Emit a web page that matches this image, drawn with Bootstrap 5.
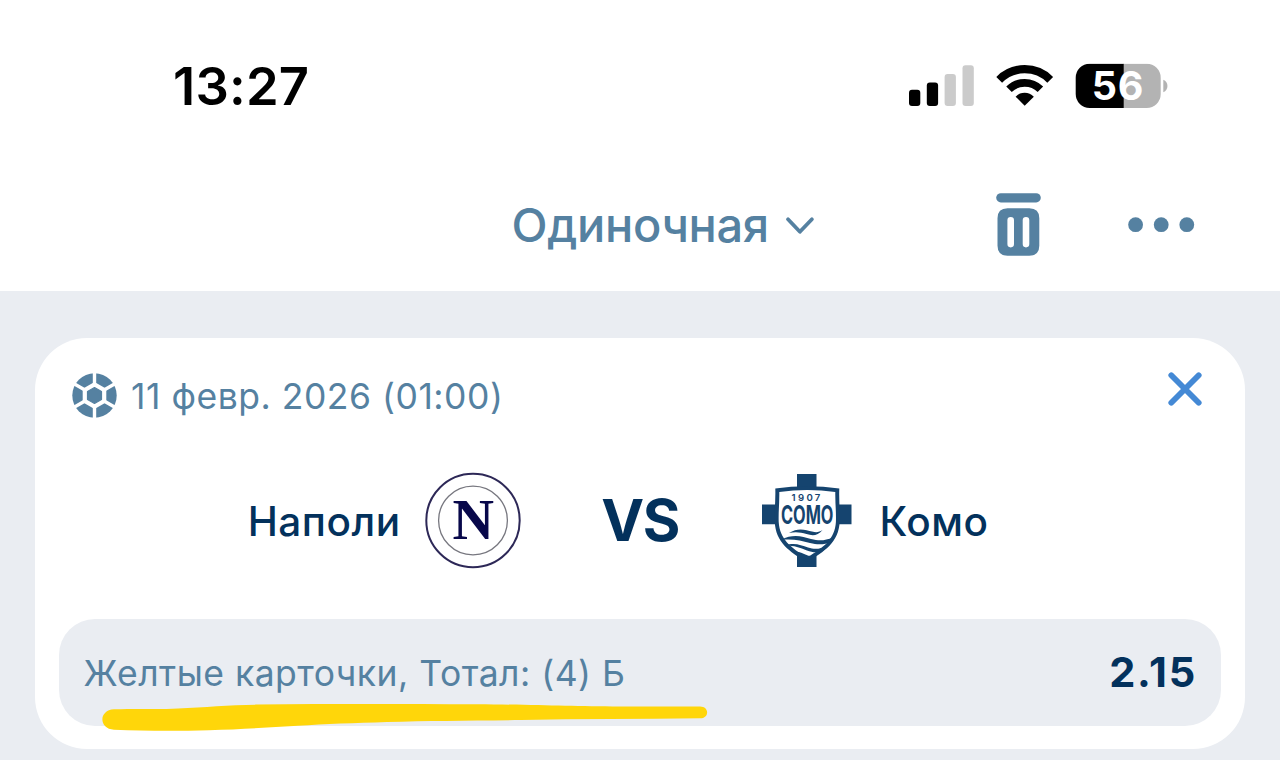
<!DOCTYPE html>
<html lang="ru">
<head>
  <meta charset="UTF-8">
  <meta name="viewport" content="width=device-width, initial-scale=1">
  <title>Купон</title>
  <link href="https://cdn.jsdelivr.net/npm/bootstrap@5.3.0/dist/css/bootstrap.min.css" rel="stylesheet">
  <style>
    :root {
      --slate: #5581a1;
      --navy: #03315c;
      --page: #eaedf2;
    }
    body {
      font-family: Inter, "Liberation Sans", sans-serif;
      background: var(--page);
      height: 760px;
      overflow: hidden;
      line-height: 1;
    }
    svg { display: block; flex: none; overflow: visible; }
    .status-bar { height: 173px; padding: 0 112px 0 173px; }
    .clock { font-size: 52.5px; font-weight: 600; letter-spacing: .2px; color: #000; }
    .toolbar { height: 118px; padding: 0 84px 14px 511.6px; color: var(--slate); }
    .bet-type { font-size: 47px; font-weight: 500; letter-spacing: -.35px; margin-bottom: 2px; }
    .slip { margin: 47px 35px 0; height: 411px; border-radius: 52px; padding: 0 24px; }
    .slip-head { height: 116px; padding: 0 19px 0 13px; color: var(--slate); }
    .event-date { font-size: 35.5px; letter-spacing: .52px; margin: 1px 0 0 14px; }
    .close-x { margin-bottom: 14px; }
    .ball { margin-bottom: 2px; }
    .teams { height: 133px; display: grid; grid-template-columns: 1fr auto 1fr; padding-left: 2px; color: var(--navy); }
    .team-name { font-size: 40.5px; font-weight: 500; letter-spacing: .5px; margin-top: 3px; }
    .versus { font-size: 57.5px; font-weight: 700; width: 241px; letter-spacing: -1.5px; padding-right: 2px; }
    .market { height: 107px; margin-top: 32px; border-radius: 36px; padding: 0 24px 0 24.4px; background: var(--page); }
    .market-name { font-size: 35.5px; letter-spacing: .49px; margin-top: 2px; color: var(--slate); }
    .odds { font-size: 41.5px; font-weight: 700; letter-spacing: 1.8px; margin-top: 1px; color: var(--navy); }
    .marker-line { left: 40px; top: 80px; }
  </style>
</head>
<body>
  <header class="bg-white">
    <div class="status-bar d-flex align-items-center justify-content-between">
      <span class="clock">13:27</span>
      <div class="d-flex align-items-center">
        <svg width="260" height="56" viewBox="908 58.500 260 56">
          <!-- signal -->
          <g fill="#000">
            <rect x="909" y="89.3" width="11.3" height="16.2" rx="3"/>
            <rect x="926.8" y="82" width="11.3" height="23.5" rx="3"/>
          </g>
          <g fill="#cbcbcb">
            <rect x="944.6" y="73.5" width="11.3" height="32" rx="3"/>
            <rect x="962.5" y="64.7" width="11.3" height="40.8" rx="3"/>
          </g>
          <!-- wifi -->
          <g fill="none" stroke="#000">
            <path d="M999.2 79.3a36 36 0 0 1 51 0" stroke-width="8.2"/>
            <path d="M1009 88.8a22.3 22.3 0 0 1 31.4 0" stroke-width="7.8"/>
          </g>
          <path d="M1015.6 96.2a12.7 12.7 0 0 1 18.2 0L1024.7 105.3z"/>
          <!-- battery -->
          <clipPath id="cell"><rect x="1075.7" y="63.2" width="85" height="44.4" rx="14"/></clipPath>
          <g clip-path="url(#cell)">
            <rect x="1075" y="63" width="49" height="45"/>
            <rect x="1123.7" y="63" width="38" height="45" fill="#b3b3b3"/>
          </g>
          <path d="M1163.3 79.300c5.500 2 5.500 10.500 0 12.500z" fill="#b3b3b3"/>
          <text x="1091.800" y="99.600" font-size="39.500" font-weight="700" fill="#fff" letter-spacing=".8">56</text>
        </svg>
      </div>
    </div>
    <div class="toolbar d-flex align-items-center">
      <div class="d-flex align-items-center">
        <span class="bet-type">Одиночная</span>
        <svg class="ms-3" width="30" height="20" viewBox="785 215.500 30 20" fill="none" stroke="currentColor" stroke-width="3.8" stroke-linecap="round" stroke-linejoin="round">
          <path d="M788 219.800l11.900 12.500 12-12.500"/>
        </svg>
      </div>
      <div class="d-flex align-items-center ms-auto">
        <svg width="200" height="64" viewBox="996 193 200 64" fill="currentColor">
          <rect x="996.200" y="193.200" width="44.600" height="9.200" rx="4.600"/>
          <path fill-rule="evenodd" d="M1007.500 208.300h21.800q10 0 10 10v27.500q0 10-10 10h-21.800q-10 0-10-10v-27.500q0-10 10-10zM1010.700 217a3.300 3.300 0 0 0-3.300 3.300v23.800a3.300 3.300 0 0 0 6.600 0v-23.800a3.300 3.300 0 0 0-3.300-3.300zM1026 217a3.300 3.300 0 0 0-3.300 3.300v23.800a3.300 3.300 0 0 0 6.600 0v-23.800a3.300 3.300 0 0 0-3.300-3.300z"/>
          <circle cx="1135.600" cy="224.700" r="7.400"/>
          <circle cx="1161.200" cy="224.700" r="7.400"/>
          <circle cx="1186.800" cy="224.700" r="7.400"/>
        </svg>
      </div>
    </div>
  </header>

  <main class="slip bg-white">
    <div class="slip-head d-flex align-items-center">
      <svg class="ball" width="45" height="45" viewBox="-22.500 -22.500 45 45">
        <circle r="22.200" fill="currentColor"/>
        <path d="M0-23V23M-20-11.500L20 11.500M-20 11.500L20-11.500" stroke="#fff" stroke-width="3.400"/>
        <path d="M0-13.600L11.800-6.800V6.800L0 13.600-11.800 6.800V-6.800z" fill="#fff"/>
        <path d="M0-8L7-4V4L0 8-7 4V-4z" fill="currentColor" stroke="currentColor" stroke-width="1.200" stroke-linejoin="round"/>
      </svg>
      <span class="event-date">11 февр. 2026 (01:00)</span>
      <svg class="close-x ms-auto" width="34" height="34" viewBox="0 0 34 34" stroke="#4489d5" stroke-width="5.800" stroke-linecap="round">
        <path d="M3.300 3.300l27.400 27.400M30.700 3.300L3.300 30.700"/>
      </svg>
    </div>

    <div class="teams align-items-center">
      <div class="d-flex align-items-center justify-content-end">
        <span class="team-name">Наполи</span>
        <svg class="ms-4" width="96" height="96" viewBox="-48 -47.500 96 96">
          <circle r="46.700" fill="#fff" stroke="#2d2857" stroke-width="2"/>
          <circle r="34.400" fill="none" stroke="#77777f" stroke-width="1.300"/>
          <text x=".3" y="18.500" text-anchor="middle" font-family="Liberation Serif" font-weight="700" font-size="57.500" fill="#08084a">N</text>
        </svg>
      </div>
      <span class="versus text-center">VS</span>
      <div class="d-flex align-items-center">
        <svg width="90" height="94" viewBox="762 474 90 94">
          <path d="M797 474h19.500v30.500H851.500v19.800H816.500V567H797V524.300H762V504.500h35z" fill="#15446f"/>
          <path d="M775.300 488.500q31.700-4.500 64 0c-.5 12 .8 22 .4 33-1 21-15 30-33 40.500-17.500-10.500-31-19.500-32-40.500-.4-11 1-21 .6-33z" fill="#15446f"/>
          <path d="M779.300 492q28-4 56 0c-.2 11 1 20 .6 30-1 17-12 25.500-28.900 35.500-16.500-10-27.300-18.500-28.300-35.500-.4-10 .8-19 .6-30z" fill="#fff"/>
          <text x="791.600" y="501.300" font-size="9.600" font-weight="600" fill="#15446f" letter-spacing="2.300">1907</text>
          <text transform="translate(781 523.800) scale(.64 1)" font-size="25.500" font-weight="700" fill="#15446f">COMO</text>
          <g fill="#15446f">
            <path d="M789 533c9-6 17-3 23-1.500 5 1.300 7 .5 10.500-1.500-5 6-10 6-16 4-6-1.800-11-2.500-17.500-1z"/>
            <path d="M781 540c12-6.500 21-3.500 30-1 9 2.300 14 1.500 22-1.500l-1 4c-8 3.500-14 3.500-22 1.500-9-2.300-17.500-4.500-29-3z"/>
            <path d="M785 545.500c9-3.500 16-.5 23 2 7 2.300 12 1.500 19-1.500l-4 5c-6 2-10.500 1.500-16-.5-7-2.700-12.500-5-22-5z"/>
            <path d="M793 552c6-.8 9 1 13 2.800 3 1.500 5 1.300 8 .7l-4 2.500-4 1.500z"/>
          </g>
        </svg>
        <span class="team-name ms-4 ps-1">Комо</span>
      </div>
    </div>

    <div class="market position-relative d-flex align-items-center justify-content-between">
      <span class="market-name">Желтые карточки, Тотал: (4) Б</span>
      <span class="odds">2.15</span>
      <!-- hand-drawn highlight under the market name -->
      <svg class="marker-line position-absolute" width="612" height="34" viewBox="99 699 612 34">
        <path d="M114 709.300C140 708.500 160 709.500 178 708.500C205 707 230 705 258 704.600C330 703.800 400 704 476 704.300C540 704.600 570 706.500 620 706.500H700C709.500 706.500 709.500 718.300 700 718.300C640 719 580 719 521 720C470 720.800 430 720.500 387 722C355 723 325 724 298 725.800C268 727.500 240 729.500 209 730.200C175 731.300 145 731 114 729.700C98.500 729 98.500 710 114 709.300z" fill="#ffd60a"/>
      </svg>
    </div>
  </main>

  <script src="https://cdn.jsdelivr.net/npm/bootstrap@5.3.0/dist/js/bootstrap.bundle.min.js"></script>
</body>
</html>
